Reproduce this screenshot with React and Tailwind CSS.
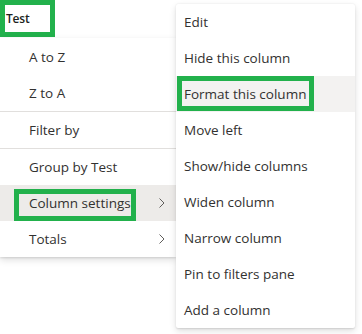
import React from 'react';

const font = { fontFamily: '"Open Sans", "Noto Sans", sans-serif' };

// Small chevron for items with a submenu
const Chevron = () => (
  <svg width="6" height="10" viewBox="0 0 6 10" className="shrink-0">
    <polyline points="0.5,0.5 5,5 0.5,9.5" fill="none" stroke="#605e5c" strokeWidth="1" />
  </svg>
);

const MenuItem = ({ label, submenu, active, mark }) => (
  <div
    className={`relative flex h-[36px] items-center justify-between pl-[29px] pr-[11px] text-[13.5px] text-[#323130] ${
      active ? 'bg-[#edebe9]' : ''
    }`}
  >
    <span>{label}</span>
    {submenu && <Chevron />}
    {mark && (
      <div className="pointer-events-none absolute left-[14px] top-[4px] h-[32px] w-[122px] border-[5px] border-[#22b14c]" />
    )}
  </div>
);

const Divider = () => <div className="h-px bg-[#e1dfdd]" />;

const SubItem = ({ label, active, mark }) => (
  <div
    className={`relative flex h-[36px] items-center pl-[8px] text-[13.5px] text-[#323130] ${
      active ? 'bg-[#f3f2f1]' : ''
    }`}
  >
    <span>{label}</span>
    {mark && (
      <div className="pointer-events-none absolute left-[1px] top-0 h-[35px] w-[137px] border-[5px] border-[#22b14c]" />
    )}
  </div>
);

export default function App() {
  const subItems = [
    'Edit',
    'Hide this column',
    'Format this column',
    'Move left',
    'Show/hide columns',
    'Widen column',
    'Narrow column',
    'Pin to filters pane',
    'Add a column',
  ];

  return (
    <div className="flex h-[334px] w-[362px] overflow-hidden bg-white" style={font}>
      {/* Left: column header + column menu */}
      <div className="flex w-[176px] shrink-0 flex-col">
        <div className="h-[38px]">
          <div className="flex h-[37px] w-[55px] items-center border-[5px] border-[#22b14c] pl-px text-[12px] font-semibold tracking-[-0.2px] text-[#201f1e]">
            Test
          </div>
        </div>
        <div className="bg-white pt-px shadow-[0_3px_7px_rgba(0,0,0,0.13),0_0.6px_1.8px_rgba(0,0,0,0.11)]">
          <MenuItem label="A to Z" />
          <MenuItem label="Z to A" />
          <Divider />
          <MenuItem label="Filter by" />
          <Divider />
          <MenuItem label="Group by Test" />
          <MenuItem label="Column settings" submenu active mark />
          <MenuItem label="Totals" submenu />
        </div>
      </div>

      {/* Right: column settings submenu */}
      <div className="z-10 mt-[4px] h-fit w-[179px] shrink-0 rounded-[2px] bg-white shadow-[0_3px_7px_rgba(0,0,0,0.13),0_0.6px_1.8px_rgba(0,0,0,0.11)]">
        {subItems.map((label) => (
          <SubItem
            key={label}
            label={label}
            active={label === 'Format this column'}
            mark={label === 'Format this column'}
          />
        ))}
      </div>
    </div>
  );
}
